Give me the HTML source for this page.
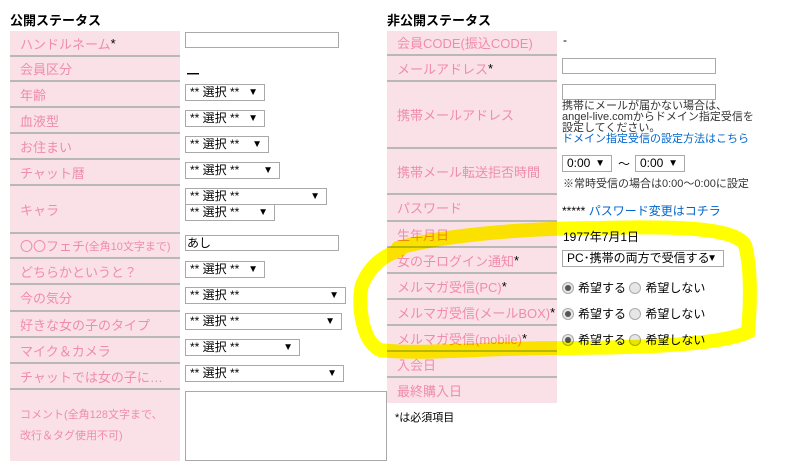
<!DOCTYPE html>
<html><head><meta charset="utf-8"><style>
*{margin:0;padding:0;box-sizing:border-box}
body{width:802px;height:461px;background:#fff;position:relative;overflow:hidden;font-family:"Liberation Sans","Noto Sans CJK JP",sans-serif;font-size:12px;color:#000}
.h{position:absolute;top:10px;font-weight:bold;font-size:13px}
.l{position:absolute;background:#fae1e8;color:#f08caa;font-size:13px;display:flex;align-items:center;padding-left:10px;border-bottom:2px solid #b8b8b8}
.l b{color:#000;font-weight:normal}
.v{position:absolute;font-size:12px}
.sel{position:absolute;height:17px;border:1px solid #a9a9a9;background:#fff;font-size:12px;line-height:15px;padding-left:4px}
.sel:after{content:"▼";position:absolute;right:6px;top:0;font-size:10px}
.inp{position:absolute;height:16px;border:1px solid #a9a9a9;background:#fff}
.r{display:inline-block;width:12px;height:12px;border-radius:50%;border:1px solid #aaa;background:#e6e6e6;vertical-align:-2px;margin-right:4px;position:relative}
.r.on:after{content:"";position:absolute;left:2px;top:2px;width:6px;height:6px;border-radius:50%;background:#555}
a{color:#0066cc;text-decoration:none}
</style></head><body>
<div class="h" style="left:10px">公開ステータス</div>
<div class="h" style="left:387px">非公開ステータス</div>

<div class="l" style="left:10px;top:31px;width:170px;height:26px">ハンドルネーム<b>*</b></div>
<div class="l" style="left:10px;top:57px;width:170px;height:25px">会員区分</div>
<div class="l" style="left:10px;top:82px;width:170px;height:26px">年齢</div>
<div class="l" style="left:10px;top:108px;width:170px;height:26px">血液型</div>
<div class="l" style="left:10px;top:134px;width:170px;height:26px">お住まい</div>
<div class="l" style="left:10px;top:160px;width:170px;height:26px">チャット暦</div>
<div class="l" style="left:10px;top:186px;width:170px;height:48px">キャラ</div>
<div class="l" style="left:10px;top:234px;width:170px;height:25px">〇〇フェチ<span style="font-size:11px">(全角10文字まで)</span></div>
<div class="l" style="left:10px;top:259px;width:170px;height:26px">どちらかというと？</div>
<div class="l" style="left:10px;top:285px;width:170px;height:27px">今の気分</div>
<div class="l" style="left:10px;top:312px;width:170px;height:26px">好きな女の子のタイプ</div>
<div class="l" style="left:10px;top:338px;width:170px;height:26px">マイク＆カメラ</div>
<div class="l" style="left:10px;top:364px;width:170px;height:26px">チャットでは女の子に…</div>
<div class="l" style="left:10px;top:390px;width:170px;height:71px;border:none;font-size:11px;line-height:21px">コメント(全角128文字まで、<br>改行＆タグ使用不可)</div>

<div class="inp" style="left:185px;top:32px;width:154px"></div>
<div class="v" style="left:187px;top:65px">━</div>
<div class="sel" style="left:185px;top:84px;width:80px">** 選択 **</div>
<div class="sel" style="left:185px;top:110px;width:80px">** 選択 **</div>
<div class="sel" style="left:185px;top:136px;width:84px">** 選択 **</div>
<div class="sel" style="left:185px;top:162px;width:95px">** 選択 **</div>
<div class="sel" style="left:185px;top:188px;width:142px">** 選択 **</div>
<div class="sel" style="left:185px;top:204px;width:90px">** 選択 **</div>
<div class="inp" style="left:185px;top:235px;width:154px;font-size:12px;line-height:14px;padding-left:1px">あし</div>
<div class="sel" style="left:185px;top:261px;width:80px">** 選択 **</div>
<div class="sel" style="left:185px;top:287px;width:161px">** 選択 **</div>
<div class="sel" style="left:185px;top:313px;width:157px">** 選択 **</div>
<div class="sel" style="left:185px;top:339px;width:115px">** 選択 **</div>
<div class="sel" style="left:185px;top:365px;width:159px">** 選択 **</div>
<div class="inp" style="left:185px;top:391px;width:202px;height:70px"></div>

<div class="l" style="left:387px;top:31px;width:170px;height:25px">会員CODE(振込CODE)</div>
<div class="l" style="left:387px;top:56px;width:170px;height:26px">メールアドレス<b>*</b></div>
<div class="l" style="left:387px;top:82px;width:170px;height:67px">携帯メールアドレス</div>
<div class="l" style="left:387px;top:149px;width:170px;height:46px">携帯メール転送拒否時間</div>
<div class="l" style="left:387px;top:195px;width:170px;height:27px">パスワード</div>
<div class="l" style="left:387px;top:222px;width:170px;height:26px">生年月日</div>
<div class="l" style="left:387px;top:248px;width:170px;height:26px">女の子ログイン通知<b>*</b></div>
<div class="l" style="left:387px;top:274px;width:170px;height:26px">メルマガ受信(PC)<b>*</b></div>
<div class="l" style="left:387px;top:300px;width:170px;height:26px">メルマガ受信(メールBOX)<b>*</b></div>
<div class="l" style="left:387px;top:326px;width:170px;height:26px">メルマガ受信(mobile)<b>*</b></div>
<div class="l" style="left:387px;top:352px;width:170px;height:26px">入会日</div>
<div class="l" style="left:387px;top:378px;width:170px;height:25px;border:none">最終購入日</div>
<div class="v" style="left:395px;top:409px;font-size:11px">*は必須項目</div>

<div class="v" style="left:563px;top:33px">-</div>
<div class="inp" style="left:562px;top:58px;width:154px"></div>
<div class="inp" style="left:562px;top:84px;width:154px"></div>
<div class="v" style="left:562px;top:101px;font-size:11px;line-height:11px;color:#333">携帯にメールが届かない場合は、<br>angel-live.comからドメイン指定受信を<br>設定してください。<br><a>ドメイン指定受信の設定方法はこちら</a></div>
<div class="sel" style="left:562px;top:155px;width:50px">0:00</div>
<div class="v" style="left:618px;top:155px">〜</div>
<div class="sel" style="left:635px;top:155px;width:50px">0:00</div>
<div class="v" style="left:563px;top:175px;font-size:11px;color:#333">※常時受信の場合は0:00〜0:00に設定</div>
<div class="v" style="left:562px;top:202px">***** <a>パスワード変更はコチラ</a></div>
<div class="v" style="left:563px;top:228px">1977年7月1日</div>
<div class="sel" style="left:562px;top:250px;width:162px">PC･携帯の両方で受信する</div>
<div class="v" style="left:562px;top:279px"><span class="r on"></span>希望する <span class="r"></span>希望しない</div>
<div class="v" style="left:562px;top:305px"><span class="r on"></span>希望する <span class="r"></span>希望しない</div>
<div class="v" style="left:562px;top:331px"><span class="r on"></span>希望する <span class="r"></span>希望しない</div>

<svg style="position:absolute;left:0;top:0;mix-blend-mode:multiply" width="802" height="461"><path d="M398,248 C440,236 520,228 600,228 C680,226 735,228 745,245 C752,270 750,310 748,332 C720,346 620,348 560,348 C480,348 420,355 380,350 C360,340 358,300 362,285 C370,265 385,255 400,250" fill="none" stroke="#ffff00" stroke-width="14" stroke-linecap="round"/></svg>
</body></html>
